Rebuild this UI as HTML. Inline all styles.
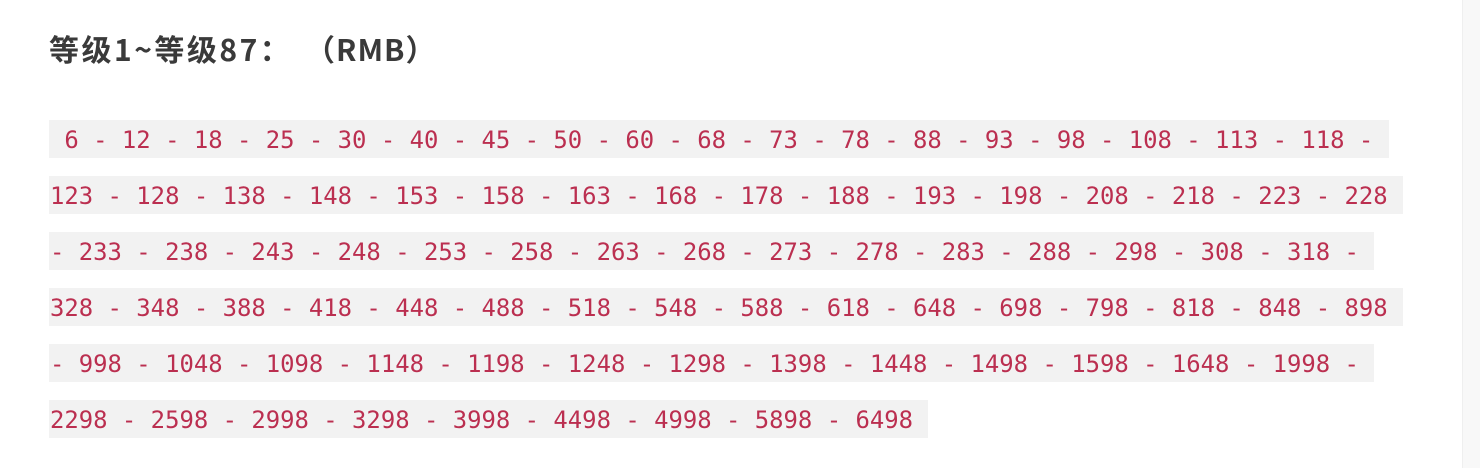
<!DOCTYPE html>
<html><head><meta charset="utf-8"><style>
html,body{margin:0;padding:0;width:1480px;height:468px;overflow:hidden;background:#fff;position:relative}
.side{position:absolute;left:1462px;top:0;width:18px;height:468px;background:#f8f8f8;border-left:1px solid #efefef}
.h{position:absolute;top:27px;margin:0;font:bold 30px/42px "Noto Sans CJK SC","Liberation Sans",sans-serif;color:#3a3a3a;white-space:pre}
.l{position:absolute;left:49px;height:38px;background:#f2f2f2;color:#bb2f50;font:23.9px/41px "DejaVu Sans Mono","Liberation Mono",monospace;white-space:pre;padding:0 1px 0 1px;overflow:hidden}
</style></head><body>
<div class="side"></div>
<div class="h" style="left:49px;letter-spacing:2.5px">等级1~等级87：</div>
<div class="h" style="left:305px;letter-spacing:1px">（RMB）</div>
<div class="l" style="top:120px"> 6 - 12 - 18 - 25 - 30 - 40 - 45 - 50 - 60 - 68 - 73 - 78 - 88 - 93 - 98 - 108 - 113 - 118 - </div>
<div class="l" style="top:176px">123 - 128 - 138 - 148 - 153 - 158 - 163 - 168 - 178 - 188 - 193 - 198 - 208 - 218 - 223 - 228 </div>
<div class="l" style="top:232px">- 233 - 238 - 243 - 248 - 253 - 258 - 263 - 268 - 273 - 278 - 283 - 288 - 298 - 308 - 318 - </div>
<div class="l" style="top:288px">328 - 348 - 388 - 418 - 448 - 488 - 518 - 548 - 588 - 618 - 648 - 698 - 798 - 818 - 848 - 898 </div>
<div class="l" style="top:344px">- 998 - 1048 - 1098 - 1148 - 1198 - 1248 - 1298 - 1398 - 1448 - 1498 - 1598 - 1648 - 1998 - </div>
<div class="l" style="top:400px">2298 - 2598 - 2998 - 3298 - 3998 - 4498 - 4998 - 5898 - 6498 </div>
</body></html>
